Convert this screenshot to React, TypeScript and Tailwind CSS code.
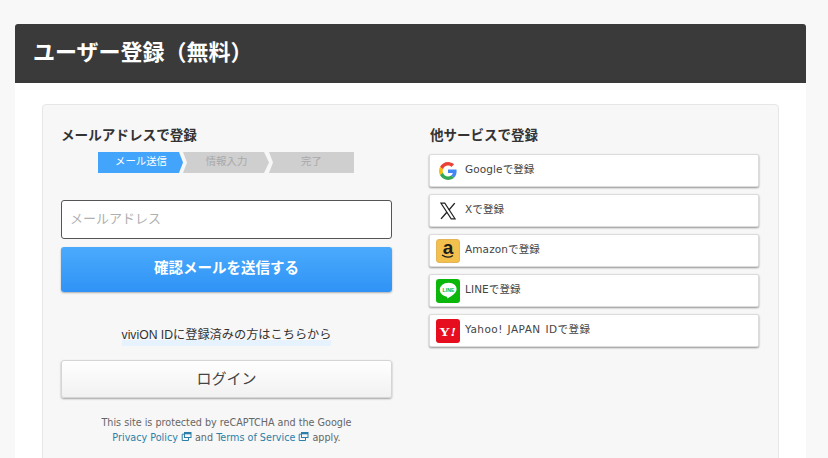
import React from "react";

const jp = "font-['DejaVu_Sans','Noto_Sans_CJK_JP',sans-serif]";

function ExtIcon() {
  return (
    <svg width="11" height="11" viewBox="0 0 11 11" className="inline-block align-[-1px] mx-[3px]" fill="none" stroke="#2b7fa8" strokeWidth="1">
      <rect x="3.5" y="1.5" width="6.5" height="5" />
      <path d="M3.5 3.2H1.2v6.3h6.3V6.6" />
      <path d="M3.5 2.6h6.5" strokeWidth="1.4" />
    </svg>
  );
}

function GoogleIcon() {
  return (
    <svg width="18" height="18" viewBox="0 0 48 48">
      <path fill="#EA4335" d="M24 9.5c3.5 0 6.7 1.2 9.2 3.600l6.900-6.900C35.900 2.400 30.400 0 24 0 14.600 0 6.500 5.400 2.600 13.200l8 6.200C12.500 13.700 17.800 9.500 24 9.500z" />
      <path fill="#4285F4" d="M46.900 24.500c0-1.600-.1-3.100-.4-4.500H24v9h12.900c-.6 3-2.200 5.500-4.800 7.200l7.700 6c4.500-4.200 7.100-10.300 7.100-17.700z" />
      <path fill="#FBBC05" d="M10.600 28.600c-.5-1.400-.8-3-.8-4.600s.3-3.200.8-4.600l-8-6.200C.9 16.500 0 20.100 0 24s.9 7.500 2.600 10.800l8-6.200z" />
      <path fill="#34A853" d="M24 48c6.500 0 11.900-2.100 15.900-5.800l-7.700-6c-2.200 1.400-4.900 2.300-8.200 2.300-6.200 0-11.500-4.200-13.400-9.900l-8 6.200C6.500 42.600 14.600 48 24 48z" />
    </svg>
  );
}

function XIcon() {
  return (
    <svg width="18" height="18" viewBox="0 0 24 24" fill="none" stroke="#222" strokeWidth="1.5">
      <path d="M2.500 1.500h5.200l13.800 21h-5.200z" />
      <path d="M21 1.500l-7.900 9.300M10.500 13.800 2.700 22.500" strokeWidth="1.900" />
    </svg>
  );
}

function AmazonIcon() {
  return (
    <div className="w-6 h-6 rounded-[3px] bg-[#f3c04e] border border-[#e3b458] flex flex-col items-center justify-center relative">
      <span className="font-['Liberation_Sans',sans-serif] font-bold text-[#1c1c1c] text-[19px] leading-none -mt-[7px]">a</span>
      <svg width="14" height="5" viewBox="0 0 14 5" className="absolute bottom-[3px] left-[4px]" fill="none" stroke="#1c1c1c" strokeWidth="1.200">
        <path d="M1 1c3.500 2.600 8 2.600 11 .4" />
      </svg>
    </div>
  );
}

function LineIcon() {
  return (
    <div className="w-6 h-6 rounded-[3px] bg-[#0cb70c] flex items-center justify-center">
      <svg width="21" height="21" viewBox="0 0 20 20">
        <path fill="#fff" d="M10 2.500c-4.700 0-8.300 3-8.300 6.800 0 3.300 2.800 6 6.600 6.600.5.100.5.400.4 1-.1.500.2.700.7.400 2.600-1.400 8.200-4.800 8.200-8C18.300 5.500 14.700 2.500 10 2.500z" />
        <text x="10" y="11" textAnchor="middle" fontSize="5" fontWeight="700" fill="#0cb70c" fontFamily="Liberation Sans">LINE</text>
      </svg>
    </div>
  );
}

function YahooIcon() {
  return (
    <div className="w-6 h-6 rounded-[3px] bg-[#e60d1f] flex items-center justify-center pt-[3px]">
      <span className="inline-block scale-x-125 font-['Liberation_Serif',serif] font-bold text-white text-[12px] leading-none">
        Y<span className="italic">!</span>
      </span>
    </div>
  );
}

const providers: { label: string; icon: React.ReactNode; text: string }[] = [
  { label: "Googleで登録", icon: <GoogleIcon />, text: "tracking-[0.1px]" },
  { label: "Xで登録", icon: <XIcon />, text: "tracking-[0.1px]" },
  { label: "Amazonで登録", icon: <AmazonIcon />, text: "tracking-[0.1px]" },
  { label: "LINEで登録", icon: <LineIcon />, text: "tracking-[0.1px]" },
  { label: "Yahoo! JAPAN IDで登録", icon: <YahooIcon />, text: "tracking-[0.45px] [word-spacing:1px]" },
];

export default function App() {
  return (
    <div className={`h-[458px] w-[828px] overflow-hidden bg-[#f8f8f8] pt-6 pl-[15px] pr-[22px] ${jp}`}>
      <div className="h-full bg-white">
        <div className="h-[59px] bg-[#3a3a3a] rounded-t-[3px] flex items-center pl-[18px] pb-[8px]">
          <h1 className="text-white font-bold text-[22px] leading-none font-['Noto_Sans_CJK_JP',sans-serif]">ユーザー登録（無料）</h1>
        </div>
        <div className="pt-[21px] px-[27px]">
          <div className="h-[400px] bg-[#f7f7f7] border border-[#e6e6e6] rounded-[4px] flex pl-[18px] pt-[20px]">
            <div className="w-[331px]">
              <h2 className="h-[20px] text-[13.600px] leading-[18px] font-bold text-[#333] font-['Noto_Sans_CJK_JP',sans-serif]">メールアドレスで登録</h2>
              <div className="ml-[37px] mt-[7px] w-[256px] h-[21px] flex text-[10.400px] font-['Noto_Sans_CJK_JP',sans-serif]">
                <div className="w-[86px] -mr-[1px] flex items-center justify-center pb-[3px] bg-[#42a4fb] text-white [clip-path:polygon(0_0,81px_0,85px_50%,81px_100%,0_100%)]">メール送信</div>
                <div className="w-[87px] -mr-[1px] flex items-center justify-center pb-[3px] bg-[#cfcfd0] text-[#a9a9a9] [clip-path:polygon(0_0,81px_0,86px_50%,81px_100%,0_100%,4px_50%)]">情報入力</div>
                <div className="flex-1 flex items-center justify-center pb-[3px] bg-[#cfcfd0] text-[#a9a9a9] [clip-path:polygon(0_0,100%_0,100%_100%,0_100%,4px_50%)]">完了</div>
              </div>
              <div className="mt-[27px] h-[39px] bg-white border border-[#555] rounded-[3px] flex items-center pl-2 pb-[4px] text-[13px] text-[#b0b0b0] font-['Noto_Sans_CJK_JP',sans-serif]">メールアドレス</div>
              <div className="mt-2 h-[45px] rounded-[3px] bg-gradient-to-b from-[#4aaafc] to-[#2f93f6] shadow-[0_1px_2px_rgba(0,0,0,0.3)] flex items-center justify-center pb-[6px] text-white font-bold text-[14.500px] font-['Noto_Sans_CJK_JP',sans-serif]">確認メールを送信する</div>
              <div className="mt-[33px] flex justify-center">
                <span className="inline-block text-[12.200px] leading-[21px] text-[#333] bg-[linear-gradient(transparent_70%,#e6f2fd_70%)] font-['Liberation_Sans','Noto_Sans_CJK_JP',sans-serif]">viviON IDに登録済みの方はこちらから</span>
              </div>
              <div className="mt-[14px] h-[38px] rounded-[3px] bg-gradient-to-b from-white to-[#f1f1f1] border border-[#d5d5d5] shadow-[0_1px_2px_rgba(0,0,0,0.35)] flex items-center justify-center pb-[2px] text-[15px] text-[#444] font-['Noto_Sans_CJK_JP',sans-serif]">ログイン</div>
              <div className="mt-[17px] text-center text-[9.650px] leading-[15px] text-[#666] font-['DejaVu_Sans',sans-serif]">
                <div>This site is protected by reCAPTCHA and the Google</div>
                <div>
                  <span className="text-[#2b7fa8]">Privacy Policy</span>
                  <ExtIcon />
                  and <span className="text-[#2b7fa8]">Terms of Service</span>
                  <ExtIcon />
                  apply.
                </div>
              </div>
            </div>
            <div className="w-[330px] ml-[37px]">
              <h2 className="h-[20px] pl-[1px] text-[13.500px] leading-[18px] font-bold text-[#333] font-['Noto_Sans_CJK_JP',sans-serif]">他サービスで登録</h2>
              <div className="mt-[9px] flex flex-col gap-[7px]">
                {providers.map((p) => (
                  <div key={p.label} className="h-[33px] bg-white rounded-[2px] border border-[#dcdcdc] shadow-[0_1px_2px_rgba(0,0,0,0.4)] flex items-center pl-[6px]">
                    <div className="w-6 h-6 flex items-center justify-center mr-[5px]">{p.icon}</div>
                    <span className={`pb-[1px] text-[10.500px] text-[#444] ${p.text}`}>{p.label}</span>
                  </div>
                ))}
              </div>
            </div>
          </div>
        </div>
      </div>
    </div>
  );
}
